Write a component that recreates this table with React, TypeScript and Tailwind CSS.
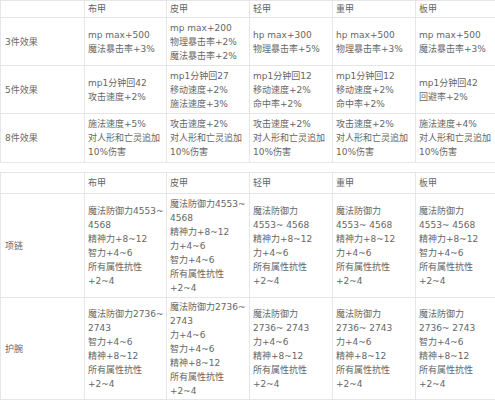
import React from "react";

const cols = "grid grid-cols-[84px_82px_83px_83px_83px_84px]";

type Row = { label: string; h: string; cells: string[][] };

const t1: Row[] = [
  {
    label: "3件效果",
    h: "h-[48px]",
    cells: [
      ["mp max+500", "魔法暴击率+3%"],
      ["mp max+200", "物理暴击率+2%", "魔法暴击率+2%"],
      ["hp max+300", "物理暴击率+5%"],
      ["hp max+500", "物理暴击率+3%"],
      ["mp max+500", "魔法暴击率+3%"],
    ],
  },
  {
    label: "5件效果",
    h: "h-[48px]",
    cells: [
      ["mp1分钟回42", "攻击速度+2%"],
      ["mp1分钟回27", "移动速度+2%", "施法速度+3%"],
      ["mp1分钟回12", "移动速度+2%", "命中率+2%"],
      ["mp1分钟回12", "移动速度+2%", "命中率+2%"],
      ["mp1分钟回42", "回避率+2%"],
    ],
  },
  {
    label: "8件效果",
    h: "h-[49px]",
    cells: [
      ["施法速度+5%", "对人形和亡灵追加", "10%伤害"],
      ["攻击速度+2%", "对人形和亡灵追加", "10%伤害"],
      ["攻击速度+2%", "对人形和亡灵追加", "10%伤害"],
      ["攻击速度+2%", "对人形和亡灵追加", "10%伤害"],
      ["施法速度+4%", "对人形和亡灵追加", "10%伤害"],
    ],
  },
];

const t2: Row[] = [
  {
    label: "项链",
    h: "h-[104px]",
    cells: [
      ["魔法防御力4553~", "4568", "精神力+8~12", "智力+4~6", "所有属性抗性", "+2~4"],
      ["魔法防御力4553~", "4568", "精神力+8~12", "力+4~6", "智力+4~6", "所有属性抗性", "+2~4"],
      ["魔法防御力", "4553~ 4568", "精神力+8~12", "力+4~6", "所有属性抗性", "+2~4"],
      ["魔法防御力", "4553~ 4568", "精神力+8~12", "力+4~6", "所有属性抗性", "+2~4"],
      ["魔法防御力", "4553~ 4568", "精神力+8~12", "智力+4~6", "所有属性抗性", "+2~4"],
    ],
  },
  {
    label: "护腕",
    h: "h-[102px]",
    cells: [
      ["魔法防御力2736~", "2743", "智力+4~6", "精神+8~12", "所有属性抗性", "+2~4"],
      ["魔法防御力2736~", "2743", "力+4~6", "智力+4~6", "精神+8~12", "所有属性抗性", "+2~4"],
      ["魔法防御力", "2736~ 2743", "力+4~6", "精神+8~12", "所有属性抗性", "+2~4"],
      ["魔法防御力", "2736~ 2743", "力+4~6", "精神+8~12", "所有属性抗性", "+2~4"],
      ["魔法防御力", "2736~ 2743", "智力+4~6", "精神+8~12", "所有属性抗性", "+2~4"],
    ],
  },
];

const heads = ["布甲", "皮甲", "轻甲", "重甲", "板甲"];

function Table({ rows, headH }: { rows: Row[]; headH: string }) {
  return (
    <div className="w-[499px] border-l border-t border-[#e6e6e6]">
      <div className={`${cols} ${headH}`}>
        <div className="border-r border-b border-[#e6e6e6]" />
        {heads.map((h) => (
          <div key={h} className="flex items-center pl-[3px] border-r border-b border-[#e6e6e6]">
            {h}
          </div>
        ))}
      </div>
      {rows.map((r) => (
        <div key={r.label} className={`${cols} ${r.h}`}>
          <div className="flex items-center pl-[4px] border-r border-b border-[#e6e6e6]">{r.label}</div>
          {r.cells.map((c, i) => (
            <div key={i} className="flex flex-col justify-center pl-[3px] border-r border-b border-[#e6e6e6]">
              {c.map((l, j) => (
                <div key={j} className="whitespace-nowrap">
                  {l}
                </div>
              ))}
            </div>
          ))}
        </div>
      ))}
    </div>
  );
}

export default function App() {
  return (
    <div
      className="w-[495px] h-[400px] overflow-hidden bg-white text-[9px] leading-[14px] text-[#666]"
      style={{ fontFamily: '"DejaVu Sans", "Noto Sans CJK SC", sans-serif' }}
    >
      <div className="pt-0">
        <Table rows={t1} headH="h-[17px]" />
      </div>
      <div className="h-[9px]" />
      <Table rows={t2} headH="h-[21px]" />
    </div>
  );
}
